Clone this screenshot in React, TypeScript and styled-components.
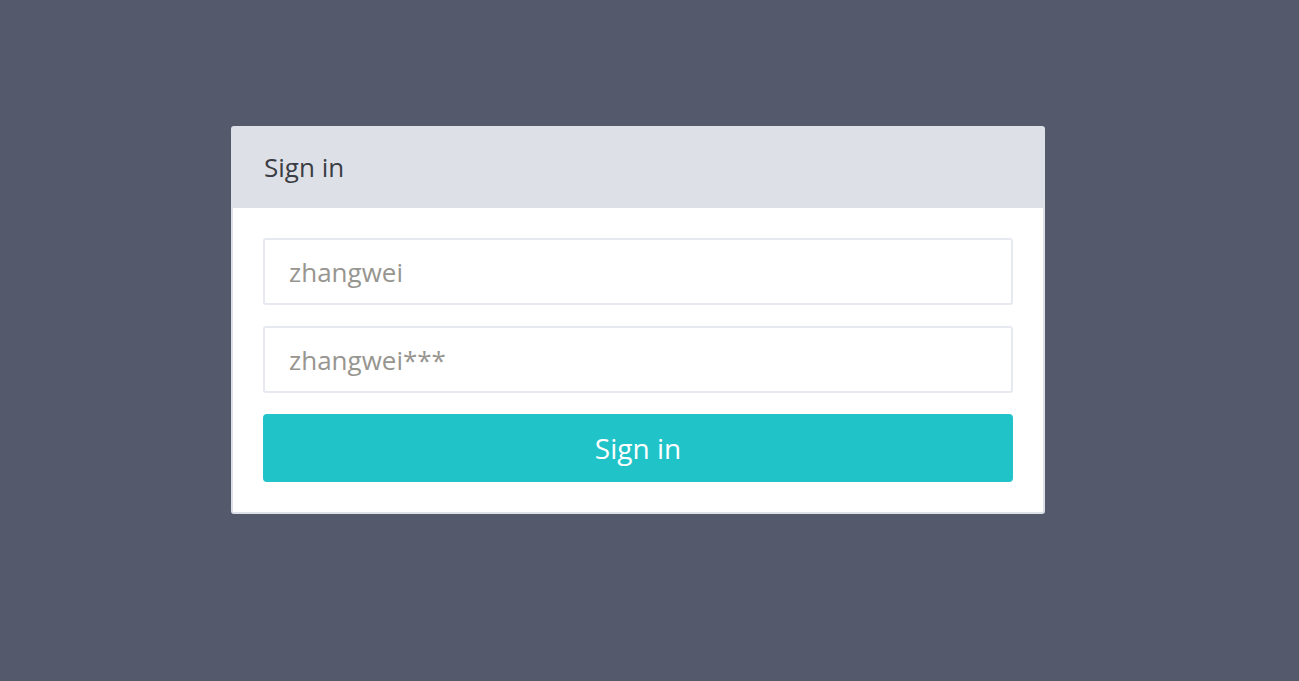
import React from 'react';
import styled, { createGlobalStyle } from 'styled-components';

const GlobalStyle = createGlobalStyle`
  html, body {
    margin: 0;
    padding: 0;
    background: #545a6c;
    font-family: "Open Sans", "Liberation Sans", sans-serif;
  }
`;

const Page = styled.div`
  min-height: 681px;
  padding: 126px 0 0 231px;
  box-sizing: border-box;
`;

const Card = styled.div`
  width: 814px;
  box-sizing: border-box;
  background: #fff;
  border: 2px solid #dee0e7;
  border-radius: 3px;
  overflow: hidden;
`;

const Header = styled.div`
  height: 80px;
  background: #dee0e7;
  display: flex;
  align-items: center;
  padding: 0 31px 3px;
  box-sizing: border-box;
  font-size: 26px;
  color: #3a3d44;
`;

const Body = styled.form`
  display: flex;
  flex-direction: column;
  gap: 21px;
  padding: 30px;
`;

const Field = styled.input`
  height: 67px;
  box-sizing: border-box;
  border: 2px solid #e6e9ef;
  border-radius: 3px;
  padding: 0 24px;
  font-family: inherit;
  font-size: 26px;
  color: #333;
  outline: none;

  &::placeholder {
    color: #97958f;
  }
`;

const SubmitButton = styled.button`
  height: 68px;
  border: none;
  border-radius: 4px;
  background: #1fc3c8;
  color: #fff;
  font-family: inherit;
  font-size: 28px;
  cursor: pointer;
`;

const App: React.FC = () => {
  return (
    <>
      <GlobalStyle />
      <Page>
        <Card>
          <Header>Sign in</Header>
          <Body onSubmit={(e) => e.preventDefault()}>
            <Field type="text" placeholder="zhangwei" />
            <Field type="text" placeholder="zhangwei***" />
            <SubmitButton type="submit">Sign in</SubmitButton>
          </Body>
        </Card>
      </Page>
    </>
  );
};

export default App;
